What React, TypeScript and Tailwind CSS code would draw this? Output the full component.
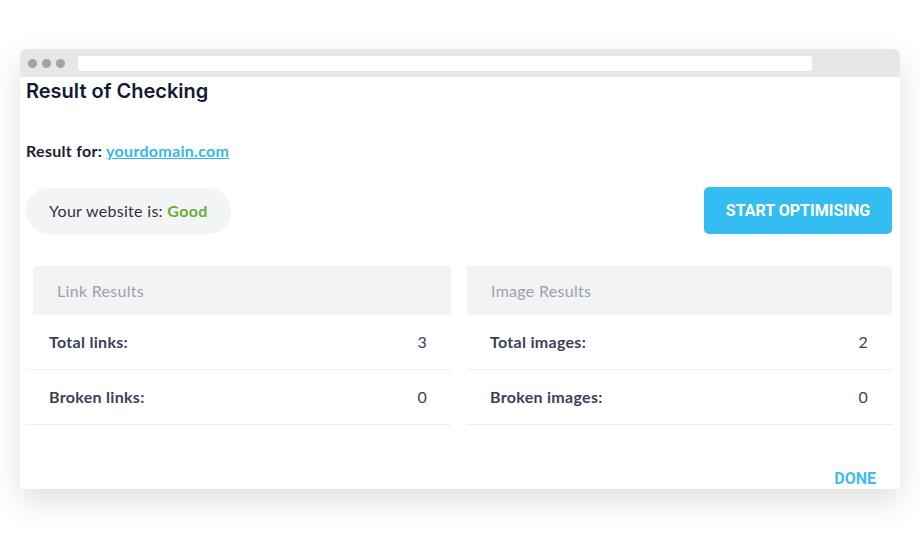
import React from "react";

const body = { fontFamily: "Lato, 'Noto Sans', sans-serif", letterSpacing: "0.3px" };
const head = { fontFamily: "Inter, Roboto, sans-serif" };
const btn = { fontFamily: "Roboto, Inter, sans-serif" };

type Row = { label: string; value: number };

function ResultTable({ title, rows, inset }: { title: string; rows: Row[]; inset?: boolean }) {
  return (
    <div className="flex flex-col">
      <div
        className={`h-[49px] flex items-center pl-6 bg-[#f2f3f5] text-[#9ba1ab] text-base ${
          inset ? "ml-[7px]" : "rounded-tr-md"
        }`}
      >
        {title}
      </div>
      {rows.map((r) => (
        <div
          key={r.label}
          className="h-[55px] flex items-center justify-between pl-[23px] pr-6 border-b border-[#eeeff1] text-base text-[#3b4058]"
        >
          <span className="font-bold">{r.label}</span>
          <span>{r.value}</span>
        </div>
      ))}
    </div>
  );
}

export default function App() {
  return (
    <div className="min-h-screen bg-white pt-[49px] px-[20px]" style={body}>
      <div className="h-[440px] rounded-t-md bg-white shadow-[0_12px_32px_rgba(0,0,0,0.13)] flex flex-col overflow-hidden">
        {/* browser chrome */}
        <div className="h-[28px] bg-[#e7e7e7] flex items-center pl-[8px] pr-[88px] gap-[13px]">
          <div className="flex gap-[5px]">
            <span className="w-[9px] h-[9px] rounded-full bg-[#a3a3a3]" />
            <span className="w-[9px] h-[9px] rounded-full bg-[#a3a3a3]" />
            <span className="w-[9px] h-[9px] rounded-full bg-[#a3a3a3]" />
          </div>
          <div className="flex-1 h-[15px] rounded-[3px] bg-white" />
        </div>

        {/* content */}
        <div className="flex-1 flex flex-col pl-[6px] pr-[8px]">
          <h1 className="text-xl leading-7 font-semibold text-[#111b36] tracking-normal" style={head}>
            Result of Checking
          </h1>

          <p className="mt-[34px] text-base leading-6 font-bold text-[#1c2030]">
            Result for:{" "}
            <a href="#" className="text-[#35b6ef] underline">
              yourdomain.com
            </a>
          </p>

          <div className="mt-[24px] flex items-center justify-between">
            <div className="h-[46px] px-[23px] flex items-center rounded-full bg-[#f3f4f6] text-base text-[#2e3240]">
              Your website is:&nbsp;<span className="font-bold text-[#6aac3a]">Good</span>
            </div>
            <button
              className="h-[47px] w-[188px] rounded-[5px] bg-[#33bdf0] text-white text-base font-bold tracking-normal"
              style={btn}
            >
              START OPTIMISING
            </button>
          </div>

          <div className="mt-[32px] grid grid-cols-2 gap-4">
            <ResultTable
              title="Link Results"
              inset
              rows={[
                { label: "Total links:", value: 3 },
                { label: "Broken links:", value: 0 },
              ]}
            />
            <ResultTable
              title="Image Results"
              rows={[
                { label: "Total images:", value: 2 },
                { label: "Broken images:", value: 0 },
              ]}
            />
          </div>

          <div className="mt-auto flex justify-end pr-[16px]">
            <button className="text-base leading-5 font-bold tracking-normal text-[#3fbdf0]" style={btn}>
              DONE
            </button>
          </div>
        </div>
      </div>
    </div>
  );
}
